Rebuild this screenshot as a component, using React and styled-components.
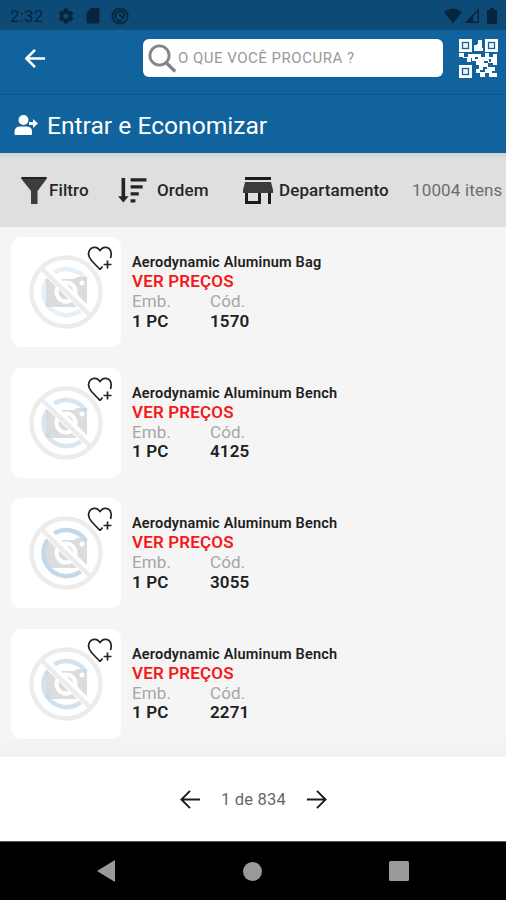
import React from "react";
import styled, { createGlobalStyle } from "styled-components";

const GlobalStyle = createGlobalStyle`
  * {
    box-sizing: border-box;
  }

  body {
    margin: 0;
    font-family: Roboto, "Liberation Sans", sans-serif;
    background-color: #f5f5f5;
  }

  svg {
    display: block;
    flex-shrink: 0;
  }
`;

const Screen = styled.div`
  display: flex;
  flex-direction: column;
  width: 506px;
  height: 900px;
  overflow: hidden;
`;

const StatusBar = styled.div`
  display: flex;
  align-items: center;
  height: 30px;
  padding: 1px 9px 0 10px;
  background-color: #0d4b76;
  color: #06253d;
`;

const Clock = styled.span`
  width: 47px;
  font-size: 17px;
  letter-spacing: 0.2px;
  white-space: nowrap;
`;

const StatusIcons = styled.div`
  display: flex;
  align-items: center;
  gap: ${(props) => props.$gap};
  margin-left: ${(props) => (props.$right ? "auto" : "0")};
`;

const Header = styled.header`
  display: flex;
  align-items: center;
  height: 65px;
  padding: 0 7px 8px 25px;
  background-color: #10639c;
  border-bottom: 1px solid #0e568a;
`;

const IconButton = styled.button`
  display: flex;
  padding: 0;
  border: none;
  background: none;
  color: ${(props) => props.$color || "inherit"};
  cursor: pointer;
`;

const SearchBox = styled.div`
  display: flex;
  align-items: center;
  width: 300px;
  height: 38px;
  margin: 0 16px 0 97px;
  padding-left: 5px;
  gap: 1px;
  border-radius: 6px;
  background-color: #fff;
`;

const SearchInput = styled.input`
  flex: 1;
  min-width: 0;
  padding: 0;
  border: none;
  outline: none;
  font-family: inherit;
  font-size: 15px;
  letter-spacing: 0.5px;
  color: #777;

  &::placeholder {
    color: #999;
    opacity: 1;
  }
`;

const LoginBar = styled.div`
  display: flex;
  align-items: center;
  height: 58px;
  padding: 2px 0 0 14px;
  gap: 9px;
  background-color: #10639c;
  color: #fff;
  font-size: 24.600px;
`;

const FilterBar = styled.div`
  display: flex;
  align-items: center;
  height: 74px;
  padding-left: 21px;
  background: linear-gradient(#cbcdd0, #dcdcdc 4px, #dfdfdf 9px);
  color: #262626;
`;

const FilterItem = styled.div`
  display: flex;
  align-items: center;
  width: ${(props) => props.$width};
  gap: ${(props) => props.$gap};
  font-size: 17px;
  font-weight: 500;
  letter-spacing: 0.1px;
  white-space: nowrap;
`;

const Total = styled.span`
  font-size: 17px;
  letter-spacing: 0.15px;
  color: #6d6d6d;
  white-space: nowrap;
`;

const List = styled.main`
  display: flex;
  flex-direction: column;
  gap: 20.5px;
  height: 530px;
  padding: 10px 11px 0;
  background: linear-gradient(#f5f5f5 96%, #f0f0f0);
`;

const Product = styled.div`
  display: flex;
  height: 110px;
  gap: 11px;
`;

const Photo = styled.div`
  position: relative;
  width: 110px;
  height: 110px;
  padding: 18px;
  border-radius: 10px;
  background-color: #fff;
`;

const Favorite = styled.button`
  position: absolute;
  top: 8px;
  right: 8px;
  padding: 0;
  border: none;
  background: none;
`;

const Info = styled.div`
  padding-top: 16px;
  color: #202020;
`;

const Name = styled.div`
  height: 19px;
  line-height: 19px;
  font-size: 14.500px;
  font-weight: 600;
  letter-spacing: 0.18px;
`;

const Prices = styled.div`
  height: 20px;
  line-height: 19px;
  font-size: 17px;
  font-weight: 600;
  letter-spacing: 0.15px;
  color: #f51a1a;
`;

const Details = styled.div`
  display: grid;
  grid-template-columns: 78px 78px;
  grid-auto-rows: 19.5px;
  line-height: 19px;
  font-size: 17px;
`;

const DetailLabel = styled.span`
  letter-spacing: 0.1px;
  color: #a6a6a6;
`;

const DetailValue = styled.span`
  font-weight: 600;
  letter-spacing: 0.15px;
`;

const Pagination = styled.div`
  display: flex;
  align-items: center;
  justify-content: center;
  height: 84px;
  gap: 20px;
  padding-left: 1px;
  background-color: #fff;
  color: #1d1d1d;
`;

const PageText = styled.span`
  font-size: 16.500px;
  letter-spacing: 0.18px;
  color: #666;
`;

const NavBar = styled.div`
  display: flex;
  align-items: center;
  justify-content: space-between;
  height: 59px;
  padding: 0 97px;
  border-top: 1px solid #555;
  background-color: #000;
`;

const Arrow = ({ flip, strokeWidth = 2 }) => (
  <svg width="21" height="21" viewBox="0 0 22 22" fill="none" stroke="currentColor" strokeWidth={strokeWidth}>
    <path d={flip ? "M1 11H20.5M11.5 2L20.5 11L11.5 20" : "M21 11H1.5M10.5 2L1.5 11L10.5 20"} />
  </svg>
);

const GearIcon = () => (
  <svg width="18" height="18" viewBox="0 0 24 24" fill="currentColor">
    <path d="M19.43 12.98c.04-.32.07-.64.07-.98s-.03-.66-.07-.98l2.11-1.65c.19-.15.24-.42.12-.64l-2-3.46c-.12-.22-.39-.3-.61-.22l-2.49 1c-.52-.4-1.08-.73-1.69-.98l-.38-2.65C14.46 2.18 14.25 2 14 2h-4c-.25 0-.46.18-.49.42l-.38 2.65c-.61.25-1.17.59-1.69.98l-2.49-1c-.23-.09-.49 0-.61.22l-2 3.46c-.13.22-.07.49.12.64l2.11 1.65c-.04.32-.07.65-.07.98s.03.66.07.98l-2.11 1.65c-.19.15-.24.42-.12.64l2 3.46c.12.22.39.3.61.22l2.49-1c.52.4 1.08.73 1.69.98l.38 2.65c.03.24.24.42.49.42h4c.25 0 .46-.18.49-.42l.38-2.65c.61-.25 1.17-.59 1.69-.98l2.49 1c.23.09.49 0 .61-.22l2-3.46c.12-.22.07-.49-.12-.64l-2.11-1.65zM12 15.5c-1.93 0-3.5-1.57-3.5-3.5s1.57-3.5 3.5-3.5 3.5 1.57 3.5 3.5-1.57 3.5-3.5 3.5z" />
  </svg>
);

const SdCardIcon = () => (
  <svg width="14" height="16" viewBox="0 0 14 16" fill="currentColor">
    <path d="M5 0H12a1.500 1.500 0 0 1 1.500 1.500V14A1.500 1.500 0 0 1 12 15.500H2A1.500 1.500 0 0 1 .5 14V5z" />
  </svg>
);

const SyncIcon = () => (
  <svg width="18" height="18" viewBox="0 0 18 18" fill="none" stroke="currentColor">
    <circle cx="9" cy="9" r="7.700" strokeWidth="1.800" />
    <path d="M5 11.500A4.700 4.700 0 1 1 13.400 10M5.500 12.500A4.800 4.800 0 0 0 11 13.300M8 7L13 12" strokeWidth="2" />
  </svg>
);

const WifiIcon = () => (
  <svg width="18" height="16" viewBox="0 0 18 16" fill="currentColor">
    <path d="M0 4Q9-3 18 4L9 15.500z" />
  </svg>
);

const SignalIcon = () => (
  <svg width="14" height="15" viewBox="0 0 14 15" fill="currentColor">
    <path fillRule="evenodd" d="M0 15L14 0V15zM8 13.500H12.600V3.500L8 8.500z" />
  </svg>
);

const BatteryIcon = () => (
  <svg width="15" height="16" viewBox="0 0 15 16" fill="currentColor">
    <path d="M8 0H12V2H15V16H5V2H8z" />
  </svg>
);

const SearchIcon = () => (
  <svg width="29" height="29" viewBox="0 0 29 29" fill="none" stroke="#858585">
    <circle cx="11.500" cy="11.500" r="9.600" strokeWidth="2.800" />
    <path d="M18 18.500L27.200 27.500" strokeWidth="3.300" />
  </svg>
);

const QrIcon = () => (
  <svg width="39" height="39" viewBox="0 0 39 39" fill="#fff">
    {[[0, 0], [26, 0], [0, 26]].map(([x, y]) => (
      <g key={`${x}-${y}`} transform={`translate(${x} ${y})`}>
        <rect width="13" height="13" />
        <rect x="3.500" y="3.500" width="6" height="6" fill="#eef5ff" stroke="#10639c" strokeWidth="1.300" />
      </g>
    ))}
    <path d="M19 1H23V9H24V12H15V6H18V5H19zM0 14H5V18H9V15H22V18H26V14H30V18H34V15H38V26H34V24H29V22H25V24H29V28H24V31H21V34H17V30H20V26H17V22H13V19H12V23H8V19H4V18H0zM28 28H36V32H33V34H38V38H30V34H26V38H21V33H26V30H28z" />
    <path d="M30 20h2v3h-2zM16 18h3v2h-3z" fill="#10639c" />
  </svg>
);

const UserIcon = () => (
  <svg width="24" height="22" viewBox="0 0 24 22" fill="currentColor">
    <circle cx="9.500" cy="6" r="5" />
    <path d="M.5 20V17.500Q1 12.500 6 12.500H12.500Q18 12.500 18 17.500V20q0 1-1 1H1.500q-1 0-1-1zM15 8h4V5l5 4.500-5 4.500v-3h-4z" />
  </svg>
);

const FilterIcon = () => (
  <svg width="26" height="27" viewBox="0 0 26 27" fill="#3d3d3d">
    <path d="M.5 0H25.500V2L16.500 14V27H10V14L.5 2z" />
    <path d="M.5 0H25.500V2H.5z" fill="#222" />
  </svg>
);

const SortIcon = () => (
  <svg width="29" height="27" viewBox="0 0 30 28" stroke="#252525" fill="none">
    <path d="M5.500 1V23" strokeWidth="3.800" />
    <path d="M0 20L5.500 26.500L11 20z" fill="#252525" stroke="none" />
    <path d="M13 3H29.500M13 10.200H25.500M13 17.500H21.500M13 24.800H18" strokeWidth="3.200" />
  </svg>
);

const StoreIcon = () => (
  <svg width="30" height="27" viewBox="0 0 30 27">
    <path d="M2 0H28V3H2z" fill="#1c1c1c" />
    <path d="M2 5H28L30 13V16H0V13z" fill="#3b3b3b" />
    <path d="M3.500 16V25.500H16.500V16M26.500 16V27" fill="none" stroke="#1c1c1c" strokeWidth="3" />
  </svg>
);

const HeartPlusIcon = () => (
  <svg width="27" height="27" viewBox="0 0 27 27" fill="none" stroke="#222" strokeWidth="1.700">
    <path d="M14 24.500L5.500 15.500C2.500 12 1.500 8 4 4.500C6 2 10 1.800 12 3.500L14 5.500L16 3.500C18 1.800 22 2 24 4.500C25.500 7 25.500 10 24.500 13M14 24.500L16.500 21.500" />
    <path d="M21.500 15.500V23.500M17.500 19.500H25.500" />
  </svg>
);

const NoPhotoIcon = ({ tint }) => (
  <svg width="74" height="74" viewBox="0 0 74 74" fill="none">
    <path d="M17 24H45L48 22H58V52H17z" fill="#dadcde" />
    <path d="M57 25A23 23 0 1 0 55 52" stroke="#c3d9ea" strokeWidth="4.500" opacity={tint} />
    <circle cx="37" cy="37" r="9.500" fill="#dadcde" stroke="#fff" strokeWidth="4" />
    <circle cx="53" cy="28" r="2.500" fill="#fff" />
    <path d="M13 12L65 62" stroke="#fff" strokeWidth="9" />
    <path d="M12 13L63 62" stroke="#ececed" strokeWidth="4.500" />
    <circle cx="37" cy="37" r="34.500" stroke="#ececed" strokeWidth="4.500" />
  </svg>
);

const products = [
  { name: "Aerodynamic Aluminum Bag", code: "1570", tint: 0.4 },
  { name: "Aerodynamic Aluminum Bench", code: "4125", tint: 0.65 },
  { name: "Aerodynamic Aluminum Bench", code: "3055", tint: 1 },
  { name: "Aerodynamic Aluminum Bench", code: "2271", tint: 0.75 },
];

const App = () => {
  return (
    <Screen>
      <GlobalStyle />
      <StatusBar>
        <Clock>2:32</Clock>
        <StatusIcons $gap="11px">
          <GearIcon />
          <SdCardIcon />
          <SyncIcon />
        </StatusIcons>
        <StatusIcons $gap="3px" $right>
          <WifiIcon />
          <SignalIcon />
          <BatteryIcon />
        </StatusIcons>
      </StatusBar>

      <Header>
        <IconButton $color="#fff">
          <Arrow strokeWidth={2.7} />
        </IconButton>
        <SearchBox>
          <SearchIcon />
          <SearchInput placeholder="O QUE VOCÊ PROCURA ?" />
        </SearchBox>
        <QrIcon />
      </Header>

      <LoginBar>
        <UserIcon />
        Entrar e Economizar
      </LoginBar>

      <FilterBar>
        <FilterItem $width="97px" $gap="2px">
          <FilterIcon />
          Filtro
        </FilterItem>
        <FilterItem $width="125px" $gap="10px">
          <SortIcon />
          Ordem
        </FilterItem>
        <FilterItem $width="169px" $gap="6px">
          <StoreIcon />
          Departamento
        </FilterItem>
        <Total>10004 itens</Total>
      </FilterBar>

      <List>
        {products.map((item) => (
          <Product key={item.code}>
            <Photo>
              <NoPhotoIcon tint={item.tint} />
              <Favorite>
                <HeartPlusIcon />
              </Favorite>
            </Photo>
            <Info>
              <Name>{item.name}</Name>
              <Prices>VER PREÇOS</Prices>
              <Details>
                <DetailLabel>Emb.</DetailLabel>
                <DetailLabel>Cód.</DetailLabel>
                <DetailValue>1 PC</DetailValue>
                <DetailValue>{item.code}</DetailValue>
              </Details>
            </Info>
          </Product>
        ))}
      </List>

      <Pagination>
        <IconButton $color="#1d1d1d">
          <Arrow />
        </IconButton>
        <PageText>1 de 834</PageText>
        <IconButton $color="#1d1d1d">
          <Arrow flip />
        </IconButton>
      </Pagination>

      <NavBar>
        <svg width="18" height="22" fill="#999">
          <path d="M18 0V22L0 11z" />
        </svg>
        <svg width="19" height="19" fill="#999">
          <circle cx="9.500" cy="9.500" r="9.500" />
        </svg>
        <svg width="20" height="20" fill="#999">
          <rect width="20" height="20" rx="1.500" />
        </svg>
      </NavBar>
    </Screen>
  );
};

export default App;
